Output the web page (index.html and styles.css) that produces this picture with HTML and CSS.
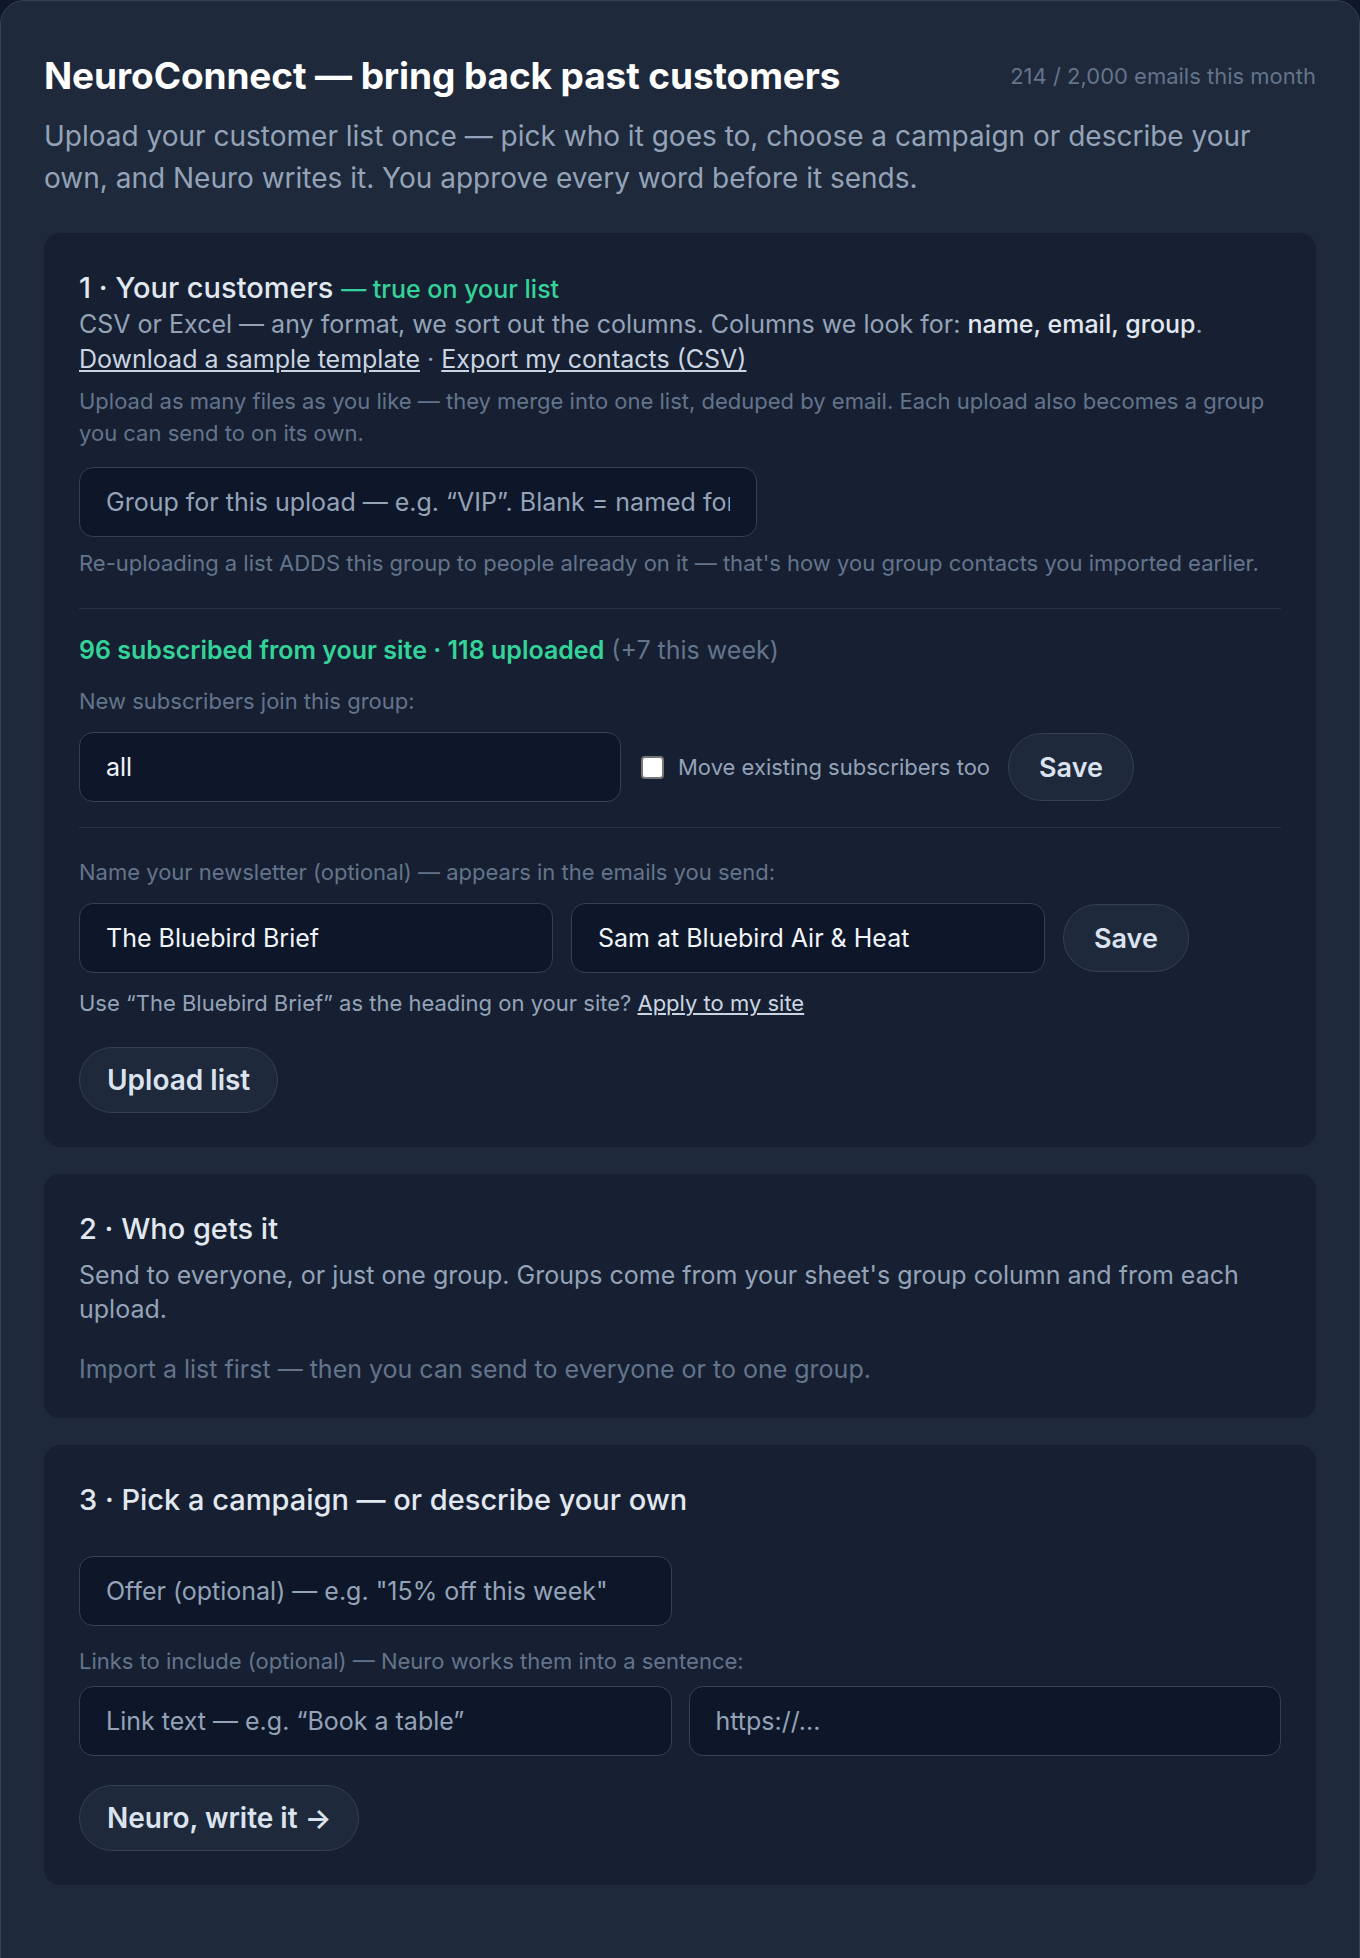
FILE: index.html
```html
<!DOCTYPE html>
<html lang="en">
<head>
    <meta charset="UTF-8">
    <meta name="viewport" content="width=device-width, initial-scale=1.0">
    <title>NeuroConnect</title>
    <link rel="stylesheet" href="styles.css">
</head>
<body>
    <div class="panel">
        <div class="panel-head">
            <h1>NeuroConnect — bring back past customers</h1>
            <span class="usage">214 / 2,000 emails this month</span>
        </div>
        <p class="intro">Upload your customer list once — pick who it goes to, choose a campaign or describe your own, and Neuro writes it. You approve every word before it sends.</p>

        <!-- 1. customers -->
        <section class="step">
            <h2>1 · Your customers <span class="accent">— true on your list</span></h2>
            <p class="lead">CSV or Excel — any format, we sort out the columns. Columns we look for: <strong>name, email, group</strong>.</p>
            <p class="lead"><a href="#">Download a sample template</a> · <a href="#">Export my contacts (CSV)</a></p>
            <p class="note note-upload">Upload as many files as you like — they merge into one list, deduped by email. Each upload also becomes a group you can send to on its own.</p>
            <input class="field field-group" type="text" placeholder="Group for this upload — e.g. “VIP”. Blank = named for the file">
            <p class="note note-after">Re-uploading a list ADDS this group to people already on it — that's how you group contacts you imported earlier.</p>

            <hr class="divider">

            <p class="stats"><span class="accent">96 subscribed from your site · 118 uploaded</span> (+7 this week)</p>
            <p class="note label">New subscribers join this group:</p>
            <div class="row">
                <input class="field field-join" type="text" value="all">
                <label class="check">
                    <input type="checkbox">
                    <span>Move existing subscribers too</span>
                </label>
                <button class="btn">Save</button>
            </div>

            <hr class="divider divider-second">

            <p class="note label label-name">Name your newsletter (optional) — appears in the emails you send:</p>
            <div class="row">
                <input class="field field-name" type="text" value="The Bluebird Brief">
                <input class="field field-name" type="text" value="Sam at Bluebird Air &amp; Heat">
                <button class="btn">Save</button>
            </div>
            <p class="note apply">Use “The Bluebird Brief” as the heading on your site? <a href="#">Apply to my site</a></p>

            <button class="btn btn-big">Upload list</button>
        </section>

        <!-- 2. audience -->
        <section class="step step-who">
            <h2>2 · Who gets it</h2>
            <p class="lead lead-who">Send to everyone, or just one group. Groups come from your sheet's group column and from each upload.</p>
            <p class="muted">Import a list first — then you can send to everyone or to one group.</p>
        </section>

        <!-- 3. campaign -->
        <section class="step">
            <h2>3 · Pick a campaign — or describe your own</h2>
            <div class="pair pair-offer">
                <input class="field" type="text" placeholder="Offer (optional) — e.g. &quot;15% off this week&quot;">
            </div>
            <p class="note label label-links">Links to include (optional) — Neuro works them into a sentence:</p>
            <div class="pair">
                <input class="field" type="text" placeholder="Link text — e.g. “Book a table”">
                <input class="field" type="text" placeholder="https://...">
            </div>
            <button class="btn btn-big">Neuro, write it →</button>
        </section>
    </div>
</body>
</html>
```

FILE: styles.css
```css
* {
    margin: 0;
    padding: 0;
    box-sizing: border-box;
}

body {
    font-family: Inter, 'Noto Sans', sans-serif;
    background: #0f172a;
    color: #e2e8f0;
}

.panel {
    background: #1e293b;
    border: 1px solid #334155;
    border-radius: 24px;
    padding: 55px 43px 71px;
    min-height: 1958px;
}

.panel-head {
    display: flex;
    justify-content: space-between;
    align-items: center;
}

h1 {
    font-size: 37px;
    line-height: 40px;
    font-weight: 700;
    color: #ffffff;
    letter-spacing: -0.1px;
}

.usage {
    font-size: 22px;
    color: #64748b;
}

.intro {
    margin: 19px 0 34px;
    font-size: 28px;
    line-height: 42px;
    color: #94a3b8;
}

.step {
    background: #162032;
    border-radius: 16px;
    padding: 37px 35px 34px;
    margin-bottom: 27px;
}

.step-who {
    padding-bottom: 32px;
}

.step h2 {
    font-size: 29px;
    line-height: 36px;
    font-weight: 500;
    color: #e2e8f0;
}

.step h2 .accent {
    font-size: 25px;
}

.accent {
    color: #34d399;
}

.lead {
    font-size: 25px;
    line-height: 35px;
    color: #94a3b8;
}

.lead strong {
    font-weight: 500;
    color: #e2e8f0;
}

a {
    color: #cbd5e1;
}

.note {
    font-size: 22px;
    line-height: 32px;
    color: #64748b;
}

.note-upload {
    margin-top: 8px;
}

.note-after {
    margin-top: 11px;
    line-height: 30px;
}

.field {
    display: block;
    height: 70px;
    padding: 0 26px;
    background: #0e1729;
    border: 1px solid #334155;
    border-radius: 14px;
    font-family: inherit;
    font-size: 25px;
    color: #f1f5f9;
    outline: none;
}

.field::placeholder {
    color: #94a3b8;
}

.field-group {
    width: 678px;
    margin-top: 18px;
}

.divider {
    border: none;
    border-top: 1px solid #263246;
    margin: 30px 0 24px;
}

.divider-second {
    margin: 25px 0 29px;
}

.stats {
    font-size: 25px;
    line-height: 35px;
    color: #64748b;
}

.stats .accent {
    font-weight: 600;
}

.label {
    line-height: 30px;
    margin-top: 18px;
}

.label-name {
    margin-top: 0;
}

.row {
    display: flex;
    align-items: center;
    gap: 18px;
    margin-top: 16px;
}

.field-join {
    width: 542px;
    margin-right: 2px;
}

.field-name {
    width: 474px;
}

.check {
    display: flex;
    align-items: center;
    gap: 14px;
    font-size: 22px;
    color: #94a3b8;
}

.check input {
    appearance: none;
    width: 23px;
    height: 23px;
    background: #ffffff;
    border: 2px solid #767676;
    border-radius: 4px;
}

.btn {
    height: 68px;
    padding: 0 30px;
    background: #1e293b;
    border: 1px solid #334155;
    border-radius: 999px;
    font-family: inherit;
    font-size: 27px;
    font-weight: 600;
    color: #dbe3ee;
    cursor: pointer;
}

.btn-big {
    display: block;
    height: 66px;
    margin-top: 29px;
    padding: 0 27px;
    font-size: 28px;
}

.apply {
    margin-top: 15px;
    line-height: 30px;
    color: #94a3b8;
}

.lead-who {
    margin-top: 11px;
    line-height: 34px;
}

.muted {
    margin-top: 26px;
    font-size: 25px;
    line-height: 34px;
    color: #64748b;
}

.pair {
    display: grid;
    grid-template-columns: 1fr 1fr;
    gap: 17px;
    margin-top: 10px;
}

.pair-offer {
    margin-top: 38px;
}

.label-links {
    margin-top: 20px;
}
```
